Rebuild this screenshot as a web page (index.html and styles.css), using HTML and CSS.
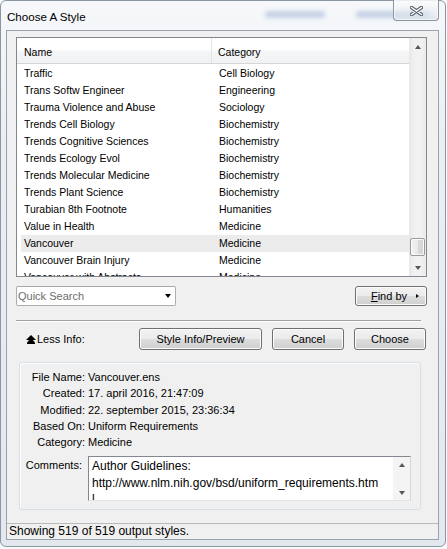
FILE: index.html
```html
<!DOCTYPE html>
<html>
<head>
<meta charset="utf-8">
<title>Choose A Style</title>
<link rel="stylesheet" href="styles.css">
</head>
<body>
<div class="window">
  <div class="titlebar">
    <span class="title">Choose A Style</span>
    <span class="blur b1"></span>
    <span class="blur b2"></span>
    <button class="close" aria-label="Close">
      <svg width="13" height="10" viewBox="0 0 13 10">
        <path d="M1.5 1.5 L11.5 8.5 M11.5 1.5 L1.5 8.5" stroke="#56616d" stroke-width="3.4" stroke-linecap="round" fill="none"/>
        <path d="M1.5 1.5 L11.5 8.5 M11.5 1.5 L1.5 8.5" stroke="#ffffff" stroke-width="1.5" stroke-linecap="round" fill="none"/>
      </svg>
    </button>
  </div>
  <div class="client">
    <div class="list">
      <div class="list-main">
        <div class="list-head">
          <div class="hcol hname">Name</div>
          <div class="hcol hcat">Category</div>
        </div>
        <div class="rows">
          <div class="row"><span class="c1">Traffic</span><span class="c2">Cell Biology</span></div>
          <div class="row"><span class="c1">Trans Softw Engineer</span><span class="c2">Engineering</span></div>
          <div class="row"><span class="c1">Trauma Violence and Abuse</span><span class="c2">Sociology</span></div>
          <div class="row"><span class="c1">Trends Cell Biology</span><span class="c2">Biochemistry</span></div>
          <div class="row"><span class="c1">Trends Cognitive Sciences</span><span class="c2">Biochemistry</span></div>
          <div class="row"><span class="c1">Trends Ecology Evol</span><span class="c2">Biochemistry</span></div>
          <div class="row"><span class="c1">Trends Molecular Medicine</span><span class="c2">Biochemistry</span></div>
          <div class="row"><span class="c1">Trends Plant Science</span><span class="c2">Biochemistry</span></div>
          <div class="row"><span class="c1">Turabian 8th Footnote</span><span class="c2">Humanities</span></div>
          <div class="row"><span class="c1">Value in Health</span><span class="c2">Medicine</span></div>
          <div class="row selected"><span class="c1">Vancouver</span><span class="c2">Medicine</span></div>
          <div class="row"><span class="c1">Vancouver Brain Injury</span><span class="c2">Medicine</span></div>
          <div class="row"><span class="c1">Vancouver with Abstracts</span><span class="c2">Medicine</span></div>
        </div>
      </div>
      <div class="vscroll">
        <span class="sbtn"><span class="tri-up"></span></span>
        <span class="track"><span class="thumb"></span></span>
        <span class="sbtn"><span class="tri-down"></span></span>
      </div>
    </div>

    <div class="search-row">
      <div class="combo">
        <span class="combo-text">Quick Search</span>
        <span class="combo-arrow"></span>
      </div>
      <button class="btn findby"><span><u>F</u>ind by</span><span class="tri-right"></span></button>
    </div>

    <div class="separator"></div>

    <div class="actions">
      <span class="less-icon">
        <svg width="10" height="9" viewBox="0 0 10 9">
          <polygon points="5,0 10,5 0,5" fill="#000"/>
          <polygon points="5,3 9,7.5 9,9 1,9 1,7.5" fill="#000"/>
        </svg>
      </span>
      <span class="less-text">Less Info:</span>
      <div class="btn-group">
        <button class="btn b-style">Style Info/Preview</button>
        <button class="btn b-cancel">Cancel</button>
        <button class="btn b-choose">Choose</button>
      </div>
    </div>

    <div class="groupbox">
      <div class="info-grid">
        <span class="lbl">File Name:</span><span class="val">Vancouver.ens</span>
        <span class="lbl">Created:</span><span class="val">17. april 2016, 21:47:09</span>
        <span class="lbl">Modified:</span><span class="val">22. september 2015, 23:36:34</span>
        <span class="lbl">Based On:</span><span class="val">Uniform Requirements</span>
        <span class="lbl">Category:</span><span class="val">Medicine</span>
      </div>
      <div class="comments-row">
        <span class="clbl">Comments:</span>
        <div class="memo">
          <div class="memo-text">Author Guidelines:<br>http://www.nlm.nih.gov/bsd/uniform_requirements.htm<br>l</div>
          <div class="memo-scroll">
            <span class="tri-up small"></span>
            <span class="tri-down small"></span>
          </div>
        </div>
      </div>
    </div>

    <div class="statusbar">Showing 519 of 519 output styles.</div>
  </div>
</div>
</body>
</html>
```

FILE: styles.css
```css
* { box-sizing: border-box; }
html, body { margin: 0; padding: 0; }
body {
  width: 447px;
  height: 549px;
  overflow: hidden;
  background: #fafbfc;
  font-family: "Liberation Sans", Arial, sans-serif;
  font-size: 11px;
  color: #000;
}

.window {
  width: 446px;
  height: 547px;
  border: 1px solid #8a96a2;
  border-radius: 6px;
  background: linear-gradient(180deg, #f6f8fa 0%, #eaeff4 25%, #e2e8ee 100%);
  display: flex;
  flex-direction: column;
}

/* title bar */
.titlebar {
  height: 29px;
  display: flex;
  position: relative;
}
.title {
  font-size: 11.6px;
  padding-left: 6px;
  align-self: center;
  margin-top: 2px;
  color: #000;
}
.blur {
  position: absolute;
  height: 7px;
  top: 10px;
  background: #7d9bc8;
  filter: blur(2.2px);
  opacity: 0.4;
  border-radius: 3px;
}
.b1 { left: 264px; width: 60px; }
.b2 { left: 355px; width: 74px; }
.close {
  margin-left: auto;
  margin-right: 6px;
  margin-top: -1px;
  width: 46px;
  height: 21px;
  padding: 0;
  border: 1px solid #8794a1;
  border-top: none;
  border-radius: 0 0 4px 4px;
  background: linear-gradient(180deg, rgba(255,255,255,0.55) 0%, rgba(235,239,243,0.6) 50%, rgba(214,222,230,0.65) 100%);
  box-shadow: inset 0 0 0 1px rgba(255,255,255,0.6);
  display: flex;
  align-items: center;
  justify-content: center;
  position: relative;
  z-index: 1;
}
.close svg { display: block; margin-top: 1px; }

/* client */
.client {
  margin-left: 5px;
  width: 433px;
  height: 510px;
  border: 1px solid #9aa3ad;
  background: #f0f0f0;
  display: flex;
  flex-direction: column;
}

/* list */
.list {
  margin: 6px 0 0 9px;
  width: 411px;
  height: 240px;
  border: 1px solid #828790;
  background: #fff;
  display: flex;
  overflow: hidden;
}
.list-main {
  flex: 1;
  overflow: hidden;
}
.list-head {
  height: 26px;
  display: flex;
  border-bottom: 1px solid #d5d5d5;
  background: linear-gradient(180deg, #ffffff 0%, #ffffff 45%, #f4f5f6 55%, #f1f2f3 100%);
}
.hcol {
  padding-top: 8px;
  font-size: 10.5px;
}
.hname {
  width: 195px;
  padding-left: 7px;
  border-right: 1px solid #e3e4e5;
}
.hcat { padding-left: 6px; }

.rows { padding-top: 1px; }
.row {
  height: 17px;
  line-height: 17px;
  margin-left: 4px;
  display: grid;
  grid-template-columns: 195px 1fr;
  font-size: 10.5px;
  white-space: nowrap;
}
.row.selected { background: #ececec; }
.c1 { padding-left: 3px; }
.c2 { padding-left: 3px; }

.vscroll {
  width: 17px;
  display: flex;
  flex-direction: column;
  background: linear-gradient(90deg, #e7e7e7 0%, #f1f1f1 30%, #f1f1f1 70%, #e9e9e9 100%);
}
.sbtn {
  height: 17px;
  display: flex;
  align-items: center;
  justify-content: center;
}
.track { flex: 1; }
.thumb {
  display: block;
  margin: 183px auto 0;
  width: 15px;
  height: 18px;
  border: 1px solid #9b9b9b;
  border-radius: 2px;
  background: linear-gradient(90deg, #f3f3f3 0%, #e9e9e9 50%, #dadada 51%, #d4d4d4 100%);
  box-shadow: inset 0 0 0 1px #fafafa;
}
.tri-up {
  width: 0; height: 0;
  border-left: 3.5px solid transparent;
  border-right: 3.5px solid transparent;
  border-bottom: 4px solid #575757;
}
.tri-down {
  width: 0; height: 0;
  border-left: 3.5px solid transparent;
  border-right: 3.5px solid transparent;
  border-top: 4px solid #575757;
}

/* search row */
.search-row {
  margin: 9px 11px 0 9px;
  height: 20px;
  display: flex;
  justify-content: space-between;
}
.combo {
  width: 160px;
  height: 20px;
  border: 1px solid #abadb3;
  border-top-color: #a4a7ad;
  border-radius: 2px;
  background: #fff;
  display: flex;
  align-items: center;
  padding-left: 1px;
}
.combo-text {
  flex: 1;
  color: #6d6d6d;
  font-size: 11px;
}
.combo-arrow {
  margin-right: 4px;
  width: 0; height: 0;
  border-left: 3.5px solid transparent;
  border-right: 3.5px solid transparent;
  border-top: 4px solid #000;
}

.btn {
  font-family: "Liberation Sans", Arial, sans-serif;
  font-size: 11px;
  color: #000;
  padding: 0;
  border: 1px solid #707070;
  border-radius: 3px;
  background: linear-gradient(180deg, #f2f2f2 0%, #ebebeb 48%, #dddddd 52%, #cfcfcf 100%);
  box-shadow: inset 0 0 0 1px #fcfcfc;
}
.findby {
  width: 72px;
  height: 20px;
  display: flex;
  align-items: center;
  justify-content: flex-end;
  padding-right: 7px;
  gap: 9px;
}
.tri-right {
  width: 0; height: 0;
  border-top: 2.5px solid transparent;
  border-bottom: 2.5px solid transparent;
  border-left: 3px solid #000;
}

/* separator */
.separator {
  margin: 14px 0 0 9px;
  width: 405px;
  height: 2px;
  border-top: 1px solid #a0a0a0;
  border-bottom: 1px solid #ffffff;
}

/* actions */
.actions {
  margin-top: 6px;
  height: 22px;
  display: flex;
  align-items: center;
  padding-left: 19px;
  padding-right: 12px;
}
.less-icon { display: flex; }
.less-icon svg { display: block; }
.less-text { margin-left: 1px; }
.btn-group {
  margin-left: auto;
  display: flex;
  gap: 10px;
}
.btn-group .btn { height: 22px; }
.b-style { width: 123px; }
.b-cancel { width: 72px; }
.b-choose { width: 72px; }

/* group box */
.groupbox {
  margin: 12px 0 0 12px;
  width: 402px;
  height: 148px;
  border: 1px solid #d5dfe5;
  border-radius: 3px;
  box-shadow: inset 1px 1px 0 #ffffff;
  padding-top: 6px;
}
.info-grid {
  display: grid;
  grid-template-columns: 65px auto;
  column-gap: 3px;
  line-height: 16.25px;
}
.lbl { text-align: right; }
.comments-row {
  margin-top: 6px;
  display: flex;
}
.clbl {
  width: 62px;
  text-align: right;
  margin-right: 6px;
  padding-top: 1px;
  line-height: 16px;
}
.memo {
  width: 323px;
  height: 45px;
  border: 1px solid #828790;
  border-right-color: #d6d6d6;
  border-bottom-color: #e3e3e3;
  background: #fff;
  display: flex;
  overflow: hidden;
}
.memo-text {
  flex: 1;
  font-size: 12px;
  line-height: 16.5px;
  padding-top: 1px;
  padding-left: 3px;
  white-space: nowrap;
  overflow: hidden;
}
.memo-scroll {
  width: 17px;
  display: flex;
  flex-direction: column;
  align-items: center;
  justify-content: space-between;
  padding: 6px 0 5px;
  background: #f4f4f4;
}

/* status bar */
.statusbar {
  margin-top: 13px;
  height: 16px;
  border-top: 1px solid #b9b9b9;
  padding-left: 2px;
  font-size: 12px;
  line-height: 14px;
  background: #f0f0f0;
}
```
